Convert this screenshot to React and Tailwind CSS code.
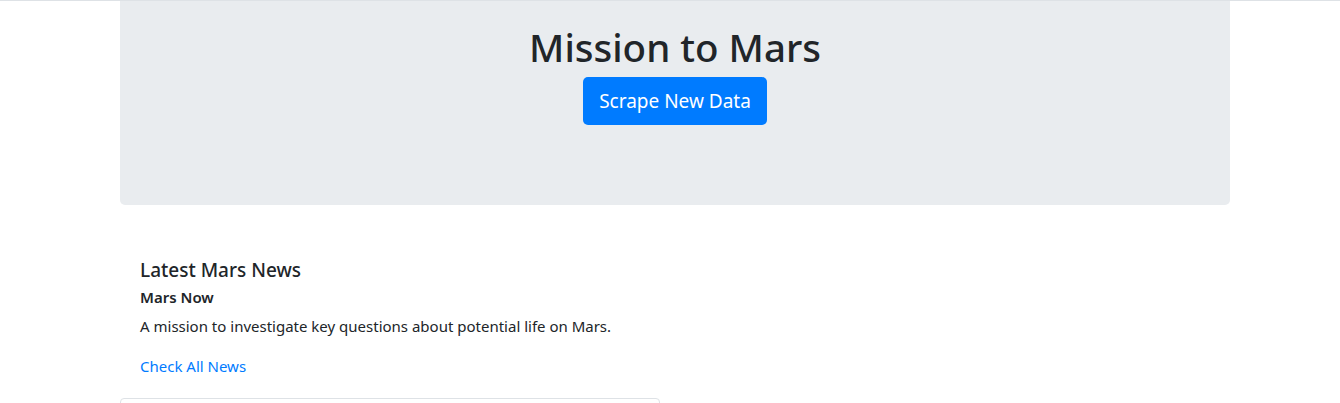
const App = () => {
  return (
    <div className="min-h-[403px] bg-white border-t border-[#dee2e6] text-[#212529] font-['Noto_Sans',sans-serif]">
      <div className="ml-[120px] w-[1110px]">
        <div className="bg-[#e9ecef] rounded-b-[5px] pt-[22px] pb-[80px] flex flex-col items-center">
          <h1 className="text-[38.5px] leading-[48px] font-medium">Mission to Mars</h1>
          <button className="mt-[6px] bg-[#007bff] text-white text-[19px] leading-[32px] px-4 py-2 rounded-[5px]">
            Scrape New Data
          </button>
        </div>

        <div className="px-5 pt-[53px]">
          <h4 className="text-[19px] leading-[24px] font-medium">Latest Mars News</h4>
          <h6 className="mt-[5px] text-[15px] leading-[20px] font-semibold">Mars Now</h6>
          <p className="mt-[8px] text-[15px] leading-[22px]">
            A mission to investigate key questions about potential life on Mars.
          </p>
          <a href="#" className="block mt-[18px] text-[15px] leading-[22px] text-[#007bff]">Check All News</a>
        </div>

        <div className="mt-[21px] w-[540px] h-[40px] border border-[#dee2e6] rounded-[4px]"></div>
      </div>
    </div>
  );
};

export default App;
